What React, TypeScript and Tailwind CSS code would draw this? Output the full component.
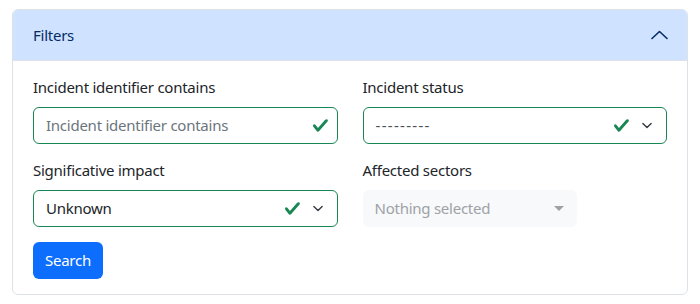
import React from 'react';

const font = { fontFamily: '"Noto Sans", "Open Sans", sans-serif' };

function ValidCheck() {
  return (
    <svg width="17" height="17" viewBox="0 0 8 8" className="shrink-0">
      <path
        fill="#198754"
        d="M2.3 6.73.6 4.53c-.4-1.04.46-1.4 1.1-.8l1.1 1.4 3.4-3.8c.6-.63 1.6-.27 1.2.7l-4 4.6c-.43.5-.8.4-1.1.1z"
      />
    </svg>
  );
}

function SelectArrow() {
  return (
    <svg width="14" height="11" viewBox="0 0 16 16" className="shrink-0">
      <path
        fill="none"
        stroke="#343a40"
        strokeWidth="2"
        strokeLinecap="round"
        strokeLinejoin="round"
        d="m2 5 6 6 6-6"
      />
    </svg>
  );
}

export default function App() {
  return (
    <div className="bg-white w-[700px] h-[304px] pt-[9px] pl-[12px]" style={font}>
      <div className="w-[676px] rounded-[6px] border border-[#dee2e6] overflow-hidden text-[15px] tracking-[-0.25px] text-[#212529]">
        {/* header */}
        <div className="h-[51px] bg-[#cfe2ff] border-b border-[#dee2e6] flex items-center justify-between pl-[20px] pr-[19px] text-[#052c65]">
          <span>Filters</span>
          <svg width="17" height="10" viewBox="0 0 17 10">
            <path
              d="M1 8.5 8.5 1.5l7.5 7"
              fill="none"
              stroke="#052c65"
              strokeWidth="1.6"
              strokeLinecap="round"
              strokeLinejoin="round"
            />
          </svg>
        </div>

        {/* body */}
        <div className="px-[20px] pt-[15px] pb-[15px]">
          <div className="grid grid-cols-2 gap-x-[25px]">
            <div className="mb-[15px]">
              <label className="block mb-[9px] leading-[22px]">Incident identifier contains</label>
              <div className="h-[37px] rounded-[6px] border border-[#198754] flex items-center pl-[12px] pr-[8px]">
                <input
                  placeholder="Incident identifier contains"
                  className="flex-1 min-w-0 outline-none bg-transparent placeholder:text-[#6c757d]"
                />
                <ValidCheck />
              </div>
            </div>
            <div className="mb-[15px]">
              <label className="block mb-[9px] leading-[22px]">Incident status</label>
              <div className="h-[37px] rounded-[6px] border border-[#198754] flex items-center pl-[12px] pr-[12px]">
                <span className="flex-1 tracking-[1.3px] text-[#495057]">---------</span>
                <ValidCheck />
                <span className="ml-[10px] flex">
                  <SelectArrow />
                </span>
              </div>
            </div>
            <div className="mb-[15px]">
              <label className="block mb-[9px] leading-[22px]">Significative impact</label>
              <div className="h-[37px] rounded-[6px] border border-[#198754] flex items-center pl-[12px] pr-[12px]">
                <span className="flex-1">Unknown</span>
                <ValidCheck />
                <span className="ml-[10px] flex">
                  <SelectArrow />
                </span>
              </div>
            </div>
            <div className="mb-[15px]">
              <label className="block mb-[9px] leading-[22px]">Affected sectors</label>
              <div className="w-[214px] h-[37px] rounded-[6px] bg-[#f8f9fa] flex items-center pl-[12px] pr-[13px] text-[#9ea2a6]">
                <span className="flex-1">Nothing selected</span>
                <span className="w-0 h-0 border-l-[5px] border-r-[5px] border-t-[5px] border-l-transparent border-r-transparent border-t-[#9ea2a6]" />
              </div>
            </div>
          </div>
          <button className="h-[37px] px-[12px] rounded-[6px] bg-[#0d6efd] text-white">Search</button>
        </div>
      </div>
    </div>
  );
}
